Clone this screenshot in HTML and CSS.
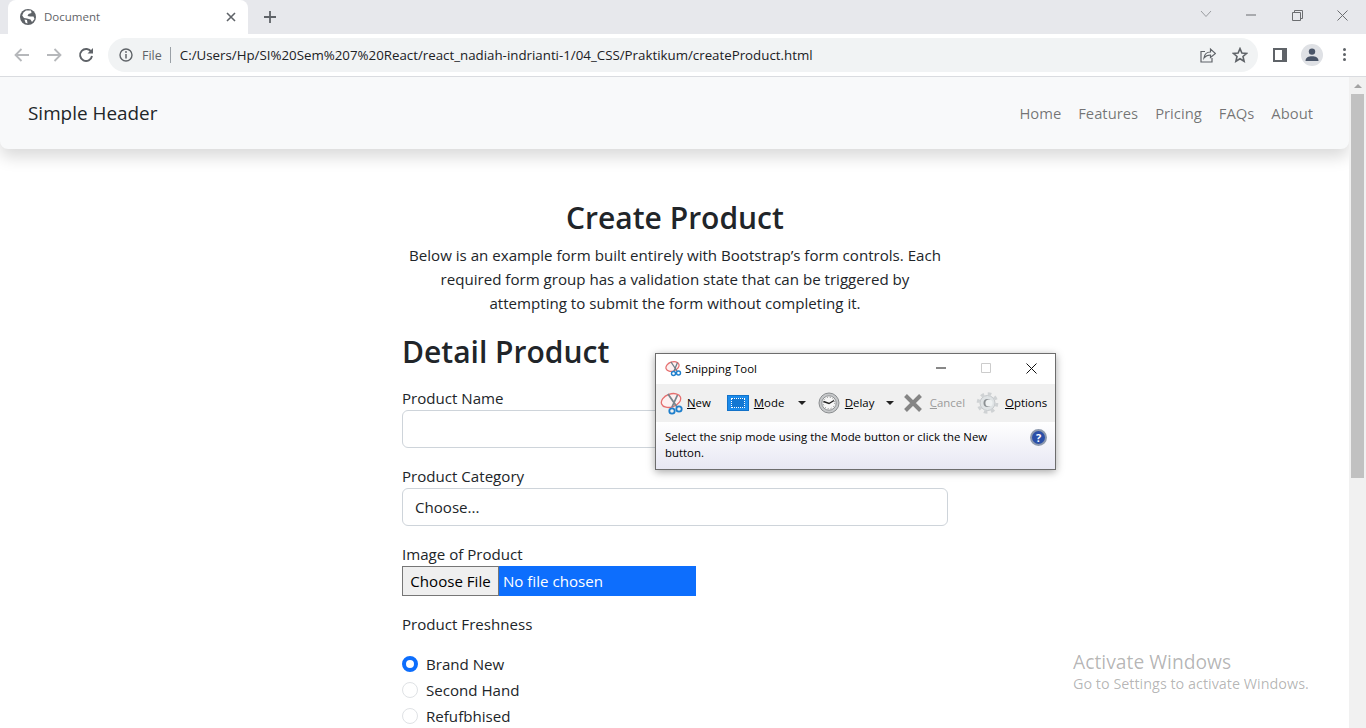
FILE: index.html
```html
<!DOCTYPE html>
<html lang="en">

<head>
    <meta charset="UTF-8">
    <meta name="viewport" content="width=device-width, initial-scale=1.0">
    <title>Document</title>
    <link rel="stylesheet" href="styles.css">
</head>

<body>
    <!-- Browser chrome -->
    <div class="tabstrip">
        <div class="tab">
            <svg class="tab-globe" width="16" height="16" viewBox="0 0 16 16">
                <circle cx="8" cy="8" r="8" fill="#5f6368" />
                <path d="M6 1.5 L11 1.5 L11.5 4 L8.5 5 L7.5 7 L10 7.5 L13.5 7.5 L14.5 10 L12 13 L10.5 10.5 L7 9.5 L4 9 L2.2 6.5 L3.5 3.5 Z" fill="#fff" />
                <path d="M4.5 10.5 L7 11 L7.5 14.5 L5.5 13.8 Z" fill="#fff" />
            </svg>
            <span class="tab-title">Document</span>
            <svg class="tab-close" width="10" height="10" viewBox="0 0 10 10">
                <path d="M1 1 L9 9 M9 1 L1 9" stroke="#5f6368" stroke-width="1.6" />
            </svg>
        </div>
        <svg class="tab-new" width="12" height="12" viewBox="0 0 12 12">
            <path d="M6 0 V12 M0 6 H12" stroke="#5f6368" stroke-width="1.8" />
        </svg>
        <div class="win-controls">
            <svg width="12" height="8" viewBox="0 0 12 8">
                <path d="M1 1 L6 6.5 L11 1" stroke="#9a9ca0" stroke-width="1" fill="none" />
            </svg>
            <svg class="win-min" width="10" height="2" viewBox="0 0 10 2">
                <path d="M0 1 H10" stroke="#6b6d70" stroke-width="1" />
            </svg>
            <svg class="win-max" width="11" height="11" viewBox="0 0 11 11">
                <path d="M.5 2.5 H8.5 V10.5 H.5 Z M2.5 2.5 V.5 H10.5 V8.5 H8.5" stroke="#6b6d70" stroke-width="1" fill="none" />
            </svg>
            <svg class="win-close" width="11" height="11" viewBox="0 0 11 11">
                <path d="M.5 .5 L10.5 10.5 M10.5 .5 L.5 10.5" stroke="#6b6d70" stroke-width="1" />
            </svg>
        </div>
    </div>

    <div class="toolbar">
        <svg class="tool-back" width="16" height="14" viewBox="0 0 16 14">
            <path d="M15 7 H2 M7.5 1 L1.5 7 L7.5 13" stroke="#b6b8bb" stroke-width="1.8" fill="none" />
        </svg>
        <svg class="tool-forward" width="16" height="14" viewBox="0 0 16 14">
            <path d="M1 7 H14 M8.5 1 L14.5 7 L8.5 13" stroke="#b6b8bb" stroke-width="1.8" fill="none" />
        </svg>
        <svg class="tool-reload" width="16" height="16" viewBox="0 0 16 16">
            <path d="M13.3 5 A6 6 0 1 0 14 9" stroke="#5f6368" stroke-width="1.9" fill="none" />
            <path d="M15 1 V6.5 H9.5 Z" fill="#5f6368" />
        </svg>
        <div class="omnibox">
            <svg class="omni-info" width="14" height="14" viewBox="0 0 14 14">
                <circle cx="7" cy="7" r="6" stroke="#5f6368" stroke-width="1.4" fill="none" />
                <path d="M7 6 V10.5" stroke="#5f6368" stroke-width="1.5" />
                <circle cx="7" cy="4" r=".9" fill="#5f6368" />
            </svg>
            <span class="omni-file">File</span>
            <span class="omni-sep"></span>
            <span class="omni-url">C:/Users/Hp/SI%20Sem%207%20React/react_nadiah-indrianti-1/04_CSS/Praktikum/createProduct.html</span>
            <svg class="omni-share" width="16" height="16" viewBox="0 0 16 16">
                <path d="M5 4.5 H1 V15 H12 V11" stroke="#5f6368" stroke-width="1.2" fill="none" />
                <path d="M4 11 C4.5 7 7 5 10.5 5 V2 L15.5 6.5 L10.5 10.5 V8 C8 8 5.5 9 4 11 Z" stroke="#5f6368" stroke-width="1.2" fill="none" />
            </svg>
            <svg class="omni-star" width="16" height="16" viewBox="0 0 16 16">
                <path d="M8 1.6 L9.9 6 L14.6 6.4 L11 9.5 L12.1 14.2 L8 11.7 L3.9 14.2 L5 9.5 L1.4 6.4 L6.1 6 Z" stroke="#5f6368" stroke-width="1.6" fill="none" />
            </svg>
        </div>
        <span class="side-panel"></span>
        <span class="avatar">
            <svg width="14" height="14" viewBox="0 0 14 14">
                <circle cx="7" cy="3.6" r="3.2" fill="#4a5568" />
                <path d="M0.5 13 C0.5 9.5 3.5 8.2 7 8.2 C10.5 8.2 13.5 9.5 13.5 13 Z" fill="#4a5568" />
            </svg>
        </span>
        <span class="kebab"><i></i><i></i><i></i></span>
    </div>

    <!-- Page viewport -->
    <div class="viewport">
        <div class="page">
            <header class="navbar">
                <a class="brand">Simple Header</a>
                <nav class="nav-links">
                    <a>Home</a>
                    <a>Features</a>
                    <a>Pricing</a>
                    <a>FAQs</a>
                    <a>About</a>
                </nav>
            </header>

            <main class="container">
                <h1>Create Product</h1>
                <p class="lead">Below is an example form built entirely with Bootstrap’s form controls. Each required form group has a validation state that can be triggered by attempting to submit the form without completing it.</p>
                <h2>Detail Product</h2>

                <form>
                    <div class="form-group">
                        <label class="form-label">Product Name</label>
                        <div class="form-control"></div>
                    </div>
                    <div class="form-group">
                        <label class="form-label">Product Category</label>
                        <div class="form-control">Choose...</div>
                    </div>
                    <div class="form-group">
                        <label class="form-label">Image of Product</label>
                        <div class="file-input">
                            <span class="file-button">Choose File</span>
                            <span class="file-name">No file chosen</span>
                        </div>
                    </div>
                    <p class="freshness">Product Freshness</p>
                    <div class="radio-row"><span class="radio radio-checked"></span>Brand New</div>
                    <div class="radio-row"><span class="radio"></span>Second Hand</div>
                    <div class="radio-row"><span class="radio"></span>Refufbhised</div>
                </form>
            </main>
        </div>

        <div class="scrollbar">
            <span class="scroll-up"></span>
            <span class="scroll-thumb"></span>
        </div>
    </div>

    <!-- Snipping Tool window -->
    <div class="snip">
        <div class="snip-title">
            <svg class="snip-logo" width="18" height="17" viewBox="0 0 18 17">
                <ellipse cx="7.5" cy="6.5" rx="6.8" ry="4.6" transform="rotate(-20 7.5 6.5)" stroke="#e56f6f" stroke-width="1.2" fill="#fdf1f1" />
                <path d="M6 2 L12 11 M12.5 2.5 L9 11" stroke="#6f7c86" stroke-width="1.3" />
                <circle cx="8.5" cy="13.5" r="2" stroke="#1f7fcc" stroke-width="1.4" fill="none" />
                <circle cx="13.5" cy="13" r="2" stroke="#1f7fcc" stroke-width="1.4" fill="none" />
            </svg>
            <span>Snipping Tool</span>
            <div class="snip-controls">
                <svg width="10" height="2" viewBox="0 0 10 2"><path d="M0 1 H10" stroke="#111" stroke-width="1" /></svg>
                <svg width="10" height="10" viewBox="0 0 10 10"><path d="M.5 .5 H9.5 V9.5 H.5 Z" stroke="#ccc" stroke-width="1" fill="none" /></svg>
                <svg width="11" height="11" viewBox="0 0 11 11"><path d="M.5 .5 L10.5 10.5 M10.5 .5 L.5 10.5" stroke="#111" stroke-width="1" /></svg>
            </div>
        </div>
        <div class="snip-tools">
            <span class="snip-tool snip-new">
                <svg width="24" height="24" viewBox="0 0 24 24">
                    <ellipse cx="11" cy="9.5" rx="10" ry="6.5" transform="rotate(-20 11 9.5)" stroke="#e56f6f" stroke-width="1.3" fill="#fdf1f1" />
                    <path d="M8 3 L17 16 M17.5 4 L12 16" stroke="#78858e" stroke-width="1.8" />
                    <circle cx="12" cy="20" r="2.7" stroke="#1f7fcc" stroke-width="1.8" fill="none" />
                    <circle cx="19" cy="18" r="2.7" stroke="#1f7fcc" stroke-width="1.8" fill="none" />
                </svg>
                <span><u>N</u>ew</span>
            </span>
            <span class="snip-tool snip-mode">
                <span class="mode-icon"><i></i></span>
                <span class="mode-label"><u>M</u>ode</span>
                <i class="caret"></i>
            </span>
            <span class="snip-tool snip-delay">
                <svg width="22" height="22" viewBox="0 0 22 22">
                    <circle cx="11" cy="11" r="10" fill="#c6c8ca" stroke="#8b8e90" stroke-width="1" />
                    <circle cx="11" cy="11" r="7.2" fill="#f7f7f7" stroke="#909395" stroke-width="1" />
                    <circle cx="11" cy="11" r="5.7" fill="none" stroke="#888" stroke-width="1" stroke-dasharray="1 2" />
                    <path d="M5.5 9.5 L11 11.5 L16 8.5" stroke="#222" stroke-width="1.4" fill="none" />
                </svg>
                <span class="delay-label"><u>D</u>elay</span>
                <i class="caret"></i>
            </span>
            <span class="snip-tool snip-cancel">
                <svg width="20" height="20" viewBox="0 0 20 20">
                    <path d="M2.5 2.5 L17.5 17.5 M17.5 2.5 L2.5 17.5" stroke="#858585" stroke-width="4" />
                </svg>
                <span><u>C</u>ancel</span>
            </span>
            <span class="snip-tool snip-options">
                <svg width="23" height="24" viewBox="0 0 23 24">
                    <circle cx="11.5" cy="12" r="7.5" fill="#dfe3e5" stroke="#c3c7ca" stroke-width="1" />
                    <circle cx="11.5" cy="12" r="9.3" fill="none" stroke="#cfd2d4" stroke-width="3" stroke-dasharray="3.6 3.7" />
                    <circle cx="11.5" cy="12" r="4" fill="#8b9093" />
                    <circle cx="13" cy="12" r="3.6" fill="#eef1f2" />
                </svg>
                <span><u>O</u>ptions</span>
            </span>
        </div>
        <div class="snip-status">
            <span class="snip-text">Select the snip mode using the Mode button or click the New button.</span>
            <span class="snip-help">?</span>
        </div>
    </div>

    <!-- Windows watermark -->
    <div class="activate">
        <div class="activate-title">Activate Windows</div>
        <div class="activate-sub">Go to Settings to activate Windows.</div>
    </div>
</body>

</html>
```

FILE: styles.css
```css
* {
    box-sizing: border-box;
}

html,
body {
    margin: 0;
    padding: 0;
    height: 728px;
    overflow: hidden;
}

body {
    position: relative;
    font-family: "Open Sans", "Noto Sans", Arial, sans-serif;
    font-size: 15.1px;
    color: #212529;
    background-color: #fff;
}

/* browser tab strip */
.tabstrip {
    height: 34px;
    background-color: #e7e8ec;
    display: flex;
    align-items: flex-end;
    padding-left: 8px;
}

.tab {
    width: 240px;
    height: 34px;
    padding: 0 12px;
    background-color: #fff;
    border-radius: 8px 8px 0 0;
    display: flex;
    align-items: center;
}

.tab-title {
    margin: 0 0 2px 8px;
    font-size: 11.5px;
    color: #5f6368;
    flex: 1;
}

.tab-new {
    margin: 0 0 11px 16px;
}

.win-controls {
    margin-left: auto;
    height: 34px;
    display: flex;
    align-items: flex-start;
    padding: 10px 18px 0 0;
}

.win-min {
    margin: 4px 0 0 34px;
}

.win-max {
    margin: 0 0 0 36px;
}

.win-close {
    margin: 0 0 0 34px;
}

/* browser toolbar */
.toolbar {
    height: 43px;
    background-color: #fff;
    border-bottom: 1px solid #dadce0;
    display: flex;
    align-items: center;
    padding: 0 0 1px 14px;
}

.tool-forward {
    margin-left: 16px;
}

.tool-reload {
    margin-left: 16px;
}

.omnibox {
    width: 1150px;
    height: 34px;
    margin-left: 14px;
    padding: 0 10px 0 11px;
    background-color: #f1f3f4;
    border-radius: 17px;
    display: flex;
    align-items: center;
}

.omni-file {
    margin: 1px 0 0 9px;
    font-size: 12.5px;
    color: #5f6368;
}

.omni-sep {
    width: 1px;
    height: 16px;
    margin: 0 9px 0 8px;
    background-color: #9aa0a6;
}

.omni-url {
    font-size: 13.3px;
    color: #202124;
    flex: 1;
    white-space: nowrap;
}

.omni-star {
    margin: 0 0 0 16px;
}

.side-panel {
    width: 14px;
    height: 14px;
    margin-left: 15px;
    border: 2px solid #5f6368;
    border-right-width: 5px;
    background-color: #fff;
}

.avatar {
    width: 22px;
    height: 22px;
    margin-left: 14px;
    background-color: #dfe1e5;
    border-radius: 50%;
    display: flex;
    align-items: center;
    justify-content: center;
}

.kebab {
    margin-left: 20px;
    display: flex;
    flex-direction: column;
    gap: 2px;
}

.kebab i {
    width: 3px;
    height: 3px;
    background-color: #5f6368;
    border-radius: 50%;
}

/* page area */
.viewport {
    height: 651px;
    display: flex;
    overflow: hidden;
}

.page {
    width: 1349px;
}

.navbar {
    height: 72px;
    padding: 0 36px 0 28px;
    background-color: #f8f9fa;
    border-radius: 0 0 8px 8px;
    box-shadow: 0 8px 16px rgba(0, 0, 0, 0.15);
    display: flex;
    align-items: center;
    justify-content: space-between;
}

.brand {
    font-size: 18.9px;
    color: #212529;
}

.nav-links {
    display: flex;
    gap: 17px;
    font-size: 14.8px;
}

.nav-links a {
    color: rgba(0, 0, 0, 0.55);
}

.container {
    width: 546px;
    margin: 50px 0 0 402px;
}

h1 {
    margin: 0;
    font-size: 30px;
    line-height: 38px;
    font-weight: 600;
    text-align: center;
}

.lead {
    margin: 6px 0 0;
    line-height: 24px;
    text-align: center;
}

h2 {
    margin: 18px 0 0;
    font-size: 30px;
    line-height: 38px;
    font-weight: 600;
}

.form-group {
    margin-bottom: 16px;
}

.form-label {
    display: block;
    line-height: 24px;
}

form {
    margin-top: 15px;
}

.form-control {
    height: 38px;
    padding: 6px 12px;
    line-height: 24px;
    border: 1px solid #ced4da;
    border-radius: 6px;
}

.file-input {
    width: 294px;
    height: 30px;
    background-color: #0d6efd;
    color: #fff;
    display: flex;
    align-items: center;
}

.file-button {
    height: 30px;
    width: 97px;
    background-color: #efefef;
    border: 1px solid #767676;
    color: #000;
    line-height: 28px;
    text-align: center;
}

.file-name {
    margin-left: 4px;
}

.freshness {
    margin: 0 0 15px;
    line-height: 24px;
}

.radio-row {
    height: 26px;
    display: flex;
    align-items: center;
}

.radio {
    width: 16px;
    height: 16px;
    margin-right: 8px;
    border: 1px solid #dfe2e5;
    border-radius: 50%;
}

.radio-checked {
    border: 4px solid #0d6efd;
}

/* scrollbar */
.scrollbar {
    width: 17px;
    background-color: #f1f1f1;
    display: flex;
    flex-direction: column;
    align-items: center;
}

.scroll-up {
    margin-top: 7px;
    border-left: 4px solid transparent;
    border-right: 4px solid transparent;
    border-bottom: 4px solid #a3a3a3;
}

.scroll-thumb {
    width: 13px;
    height: 384px;
    margin-top: 6px;
    background-color: #c1c1c1;
}

/* snipping tool */
.snip {
    position: absolute;
    left: 655px;
    top: 353px;
    width: 401px;
    height: 117px;
    background-color: #fff;
    border: 1px solid #6d6d6d;
    box-shadow: 0 2px 8px rgba(0, 0, 0, 0.35);
    font-size: 11.4px;
    color: #000;
    display: flex;
    flex-direction: column;
}

.snip-title {
    height: 30px;
    padding: 0 18px 2px 9px;
    display: flex;
    align-items: center;
    gap: 2px;
}

.snip-controls {
    margin-left: auto;
    display: flex;
    align-items: center;
    gap: 35px;
}

.snip-tools {
    height: 38px;
    padding: 0 0 1px 4px;
    background-color: #f0f0f0;
    display: flex;
    align-items: center;
}

.snip-tool {
    display: flex;
    align-items: center;
}

.snip-new {
    gap: 3px;
}

.snip-mode {
    margin-left: 16px;
}

.mode-icon {
    width: 22px;
    height: 16px;
    background-color: #1b8beb;
    border: 1px solid #1272c9;
    display: flex;
    align-items: center;
    justify-content: center;
}

.mode-icon i {
    width: 14px;
    height: 10px;
    border: 1px dotted #fff;
    background-color: #1377d2;
}

.mode-label {
    margin-left: 5px;
    width: 33px;
}

.delay-label {
    margin-left: 5px;
    width: 30px;
}

.caret {
    width: 0;
    height: 0;
    margin-left: 11px;
    border-left: 4px solid transparent;
    border-right: 4px solid transparent;
    border-top: 4px solid #222;
}

.snip-delay {
    margin-left: 12px;
}

.snip-cancel {
    margin-left: 9px;
    color: #9b9b9b;
    gap: 7px;
}

.snip-options {
    margin-left: 11px;
    gap: 6px;
}

.snip-status {
    flex: 1;
    padding: 7px 8px 0 9px;
    background: linear-gradient(#fff, #e7e7f3);
    line-height: 16px;
    display: flex;
    justify-content: space-between;
}

.snip-text {
    width: 345px;
}

.snip-help {
    width: 17px;
    height: 17px;
    background-color: #2b4fa8;
    border: 2px solid #8d99ad;
    border-radius: 50%;
    color: #fff;
    font-weight: 700;
    font-size: 11px;
    line-height: 13px;
    text-align: center;
}

/* activate windows watermark */
.activate {
    position: absolute;
    left: 1073px;
    top: 649px;
    color: rgba(0, 0, 0, 0.3);
    pointer-events: none;
}

.activate-title {
    font-size: 19.3px;
    line-height: 26px;
}

.activate-sub {
    margin-top: -1px;
    font-size: 14.4px;
    line-height: 19px;
}
```
